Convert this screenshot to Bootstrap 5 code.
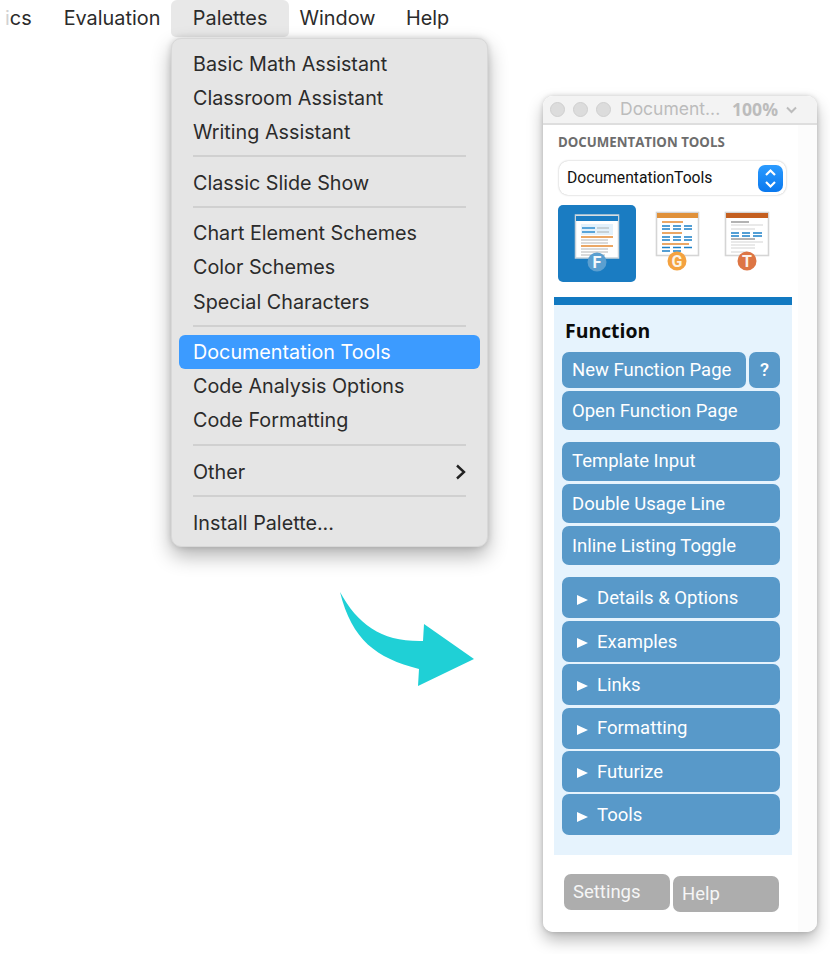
<!DOCTYPE html>
<html lang="en">
<head>
<meta charset="utf-8">
<title>Palettes</title>
<link href="https://cdn.jsdelivr.net/npm/bootstrap@5.3.0/dist/css/bootstrap.min.css" rel="stylesheet">
<style>
html,body{height:100%;background:#fff;overflow:hidden}
.stage{position:relative;width:830px;height:954px;font-family:Inter,"Liberation Sans",sans-serif;color:#2b2b2b}
.menubar{height:37px;font-size:19.85px;padding-left:5px}
.menubar .bar-item{line-height:37px;padding:0 22px;border-radius:6px 6px 5px 5px}
.menubar .bar-item.first{padding:0;margin-right:32px}
.menubar .bar-item.plain{padding:0 32.5px 0 0}
.menubar .bar-item.win{padding-right:30.5px}
.menubar .bar-item.open{background:#e8e8e8;margin-right:10px;margin-left:-22px}
.faint{color:#d2d2d2}
.app-menu.dropdown-menu{left:171px;top:38px;width:317px;height:509px;background:#e5e5e5;border:1px solid #d8d8d8;border-radius:10px;padding:7.8px 7px 0;box-shadow:0 9px 20px rgba(0,0,0,.3),0 0 6px rgba(0,0,0,.15);font-size:19.75px}
.app-menu .dropdown-item{height:34.2px;line-height:34.2px;padding:0 14px;border-radius:6px;color:#2b2b2b}
.app-menu .dropdown-item.active{background:#3c9bff;color:#fff}
.app-menu .dropdown-divider{margin:6px 14px 8.3px;height:0;border-top:2px solid #d0d0d0;opacity:1}
.app-menu .dropdown-item.active ~ .dropdown-divider{margin:6.5px 14px 8.5px}
.curve-arrow{position:absolute;left:335px;top:585px}
.pal-window{position:absolute;left:543px;top:96px;width:274px;height:836px;border:0;border-radius:10px;background:linear-gradient(to right,#fff 255px,#fcfcfc 255px);box-shadow:0 8px 16px rgba(0,0,0,.28),0 0 5px rgba(0,0,0,.18);font-family:Roboto,"Liberation Sans",sans-serif;overflow:hidden}
.pal-title{height:29px;background:#f3f3f3;border-bottom:2px solid #dedede;padding-left:7px;color:#bcbcbc}
.traffic{width:15px;height:15px;border-radius:50%;background:#dcdcdc;border:1px solid #cfcfcf;margin-right:8px}
.pal-name{font-family:Inter,sans-serif;font-size:17.5px;margin-left:1px;width:112px;white-space:nowrap}
.pal-zoom{font-family:"Open Sans",sans-serif;font-size:17.6px;font-weight:700}
.pal-head{font-family:"Open Sans",sans-serif;font-size:13.25px;font-weight:700;color:#6d6d6d;line-height:18px;margin:8px 0 0 15px;white-space:nowrap}
.pal-select{margin:10px 0 0 16px;width:227px;height:34px;background:#fff;border-radius:9px;box-shadow:0 0 2px rgba(0,0,0,.3);padding:0 3px 0 8px;font-size:15.7px;color:#111}
.stepper{width:25px;height:27px;border-radius:7px;background:linear-gradient(#2b9bff,#0a78ee)}
.tabs-row{margin:10px 0 0 15px;height:77px}
.pal-tile{width:78px;height:77px;border-radius:5px;background:#1a7cc2;flex:none}
.pal-tile.off{background:transparent}
.pal-panel{margin:15px 0 0 11px;width:238px;height:558px;background:#e6f3fd;border-top:8px solid #1279c1;padding:13px 12px 0 8px}
.pal-h{font-family:"Open Sans",sans-serif;font-weight:700;font-size:19.4px;line-height:26px;color:#0b0b0b;margin:0 0 8px 3px}
.act.btn{display:block;background:#5899c9;border:0;color:#fff;font-size:18.5px;line-height:1;border-radius:7px;text-align:left;padding:1px 10px 0;height:39px;width:100%}
.act.btn:hover{background:#5899c9;color:#fff}
.act.short{height:36px}
.act.q{width:31px;flex:none;text-align:center;padding:0;font-weight:500}
.act.wide{flex:1;width:auto}
.tight{gap:3px}
.grp{margin-top:11.5px}
.grp .act.btn{height:39.3px}
.grp2{margin-top:12px;gap:2.4px}
.grp2 .act.btn{height:41px}
.tri{display:inline-block;width:0;height:0;border-left:11px solid #fff;border-top:5px solid transparent;border-bottom:5px solid transparent;margin:0 9px 0 5px;vertical-align:-0.5px}
.foot{margin:19px 0 0 21px}
.foot-btn.btn{background:#adadad;border:0;border-radius:7px;color:#f6f6f6;font-size:18.5px;width:106px;height:36px;padding:0 0 0 9px;text-align:left;line-height:1}
.foot-btn.low{margin:2px 0 0 3px}
</style>
</head>
<body>
<div class="stage">
  <nav class="menubar d-flex align-items-start">
    <span class="bar-item first"><span class="faint">i</span>cs</span>
    <span class="bar-item plain">Evaluation</span>
    <span class="bar-item open">Palettes</span>
    <span class="bar-item plain win">Window</span>
    <span class="bar-item plain">Help</span>
  </nav>

  <div class="app-menu dropdown-menu show">
    <a class="dropdown-item" href="#">Basic Math Assistant</a>
    <a class="dropdown-item" href="#">Classroom Assistant</a>
    <a class="dropdown-item" href="#">Writing Assistant</a>
    <hr class="dropdown-divider">
    <a class="dropdown-item" href="#">Classic Slide Show</a>
    <hr class="dropdown-divider">
    <a class="dropdown-item" href="#">Chart Element Schemes</a>
    <a class="dropdown-item" href="#">Color Schemes</a>
    <a class="dropdown-item" href="#">Special Characters</a>
    <hr class="dropdown-divider">
    <a class="dropdown-item active" href="#">Documentation Tools</a>
    <a class="dropdown-item" href="#">Code Analysis Options</a>
    <a class="dropdown-item" href="#">Code Formatting</a>
    <hr class="dropdown-divider">
    <a class="dropdown-item d-flex justify-content-between align-items-center" href="#">Other
      <svg width="11" height="16" viewBox="0 0 11 16"><path d="M2 1.5 9 8 2 14.5" fill="none" stroke="#222" stroke-width="2.4"/></svg></a>
    <hr class="dropdown-divider">
    <a class="dropdown-item" href="#">Install Palette...</a>
  </div>

  <svg class="curve-arrow" width="145" height="108" viewBox="335 585 145 108">
    <path d="M340 592C358 625 382 642 423 641L424 624 474 659 418 686 419 669C376 658 352 640 340 592Z" fill="#1fd0d6"/>
  </svg>

  <div class="card pal-window">
    <div class="pal-title d-flex align-items-center">
      <span class="traffic"></span><span class="traffic"></span><span class="traffic"></span>
      <span class="pal-name">Document...</span>
      <span class="pal-zoom">100%</span>
      <svg class="ms-2" width="11" height="8" viewBox="0 0 11 8"><path d="M1 1.5 5.5 6 10 1.5" fill="none" stroke="#bcbcbc" stroke-width="2"/></svg>
    </div>
    <div class="pal-head">DOCUMENTATION TOOLS</div>
    <div class="pal-select d-flex align-items-center justify-content-between">
      <span>DocumentationTools</span>
      <span class="stepper d-flex align-items-center justify-content-center">
        <svg width="13" height="21" viewBox="0 0 13 21"><path d="M2 7 6.5 2.5 11 7M2 14 6.5 18.5 11 14" fill="none" stroke="#fff" stroke-width="2.2"/></svg>
      </span>
    </div>
    <div class="tabs-row d-flex">
      <div class="pal-tile">
        <svg width="78" height="77" viewBox="558 205 78 77">
          <rect x="575.5" y="215" width="43" height="43" fill="#fff" stroke="#c9d3da" stroke-width="1.5"/>
          <rect x="576" y="216" width="42" height="5" fill="#1a7cc2"/>
          <rect x="581" y="224" width="32" height="11" fill="#e3f1fb"/>
          <path d="M582 228h13M582 232h13" stroke="#2d8ccf" stroke-width="1.6"/>
          <path d="M597 228h12M597 232h12" stroke="#bdc6cc" stroke-width="1.6"/>
          <path d="M581 237h32M581 246h32" stroke="#e58a33" stroke-width="1.4"/>
          <path d="M581 240h27M581 243h27M581 249h27M581 252h27M581 255h24" stroke="#b5b5b5" stroke-width="1.2"/>
          <circle cx="597" cy="262" r="9.5" fill="#5b9fd0"/>
          <text x="597" y="268" text-anchor="middle" font-family="Roboto,sans-serif" font-weight="700" font-size="16" fill="#f4f8fb">F</text>
        </svg>
      </div>
      <div class="pal-tile off">
        <svg width="78" height="77" viewBox="636 205 78 77">
          <rect x="656.5" y="212.5" width="42" height="43" fill="#fff" stroke="#d5d5d5" stroke-width="1.6"/>
          <rect x="657" y="213" width="41" height="5" fill="#e0913a"/>
          <path d="M662 222h21M662 233h20M662 244h27" stroke="#e58a33" stroke-width="1.3"/>
          <path d="M662 226h8M673 226h8M684 226h8M662 229h8M673 229h8M684 229h8M662 237h8M673 237h8M684 237h8M662 240h8M673 240h8M684 240h8M662 247.5h8M673 247.5h8M684 247.5h8M662 251h8M673 251h8" stroke="#1c80c8" stroke-width="1.5"/>
          <circle cx="677" cy="261" r="9.5" fill="#f4a23f"/>
          <text x="677" y="267" text-anchor="middle" font-family="Roboto,sans-serif" font-weight="700" font-size="16" fill="#fbf3e6">G</text>
        </svg>
      </div>
      <svg width="78" height="77" viewBox="714 205 78 77">
        <rect x="725.5" y="212.5" width="43" height="43" fill="#fff" stroke="#d5d5d5" stroke-width="1.6"/>
        <rect x="726" y="213" width="42" height="5" fill="#c45f1f"/>
        <path d="M731 222h18M731 239h24" stroke="#9a9a9a" stroke-width="1.4"/>
        <path d="M731 225h32M731 229h24M731 242h32M731 245h24M731 248h24M731 252h16" stroke="#d4d4d4" stroke-width="1.2"/>
        <path d="M731 233h8M742 233h8M753 233h9M731 236h8M742 236h8M753 236h9" stroke="#1c80c8" stroke-width="1.5"/>
        <circle cx="747" cy="261" r="9.5" fill="#dd7544"/>
        <text x="747" y="267" text-anchor="middle" font-family="Roboto,sans-serif" font-weight="700" font-size="16" fill="#fbf0ea">T</text>
      </svg>
    </div>

    <div class="pal-panel">
      <div class="pal-h">Function</div>
      <div class="d-flex flex-column tight">
        <div class="d-flex tight">
          <button class="btn act short wide">New Function Page</button>
          <button class="btn act short q">?</button>
        </div>
        <button class="btn act">Open Function Page</button>
      </div>
      <div class="d-flex flex-column grp tight">
        <button class="btn act">Template Input</button>
        <button class="btn act">Double Usage Line</button>
        <button class="btn act">Inline Listing Toggle</button>
      </div>
      <div class="d-flex flex-column grp2">
        <button class="btn act"><span class="tri"></span>Details &amp; Options</button>
        <button class="btn act"><span class="tri"></span>Examples</button>
        <button class="btn act"><span class="tri"></span>Links</button>
        <button class="btn act"><span class="tri"></span>Formatting</button>
        <button class="btn act"><span class="tri"></span>Futurize</button>
        <button class="btn act"><span class="tri"></span>Tools</button>
      </div>
    </div>

    <div class="foot d-flex align-items-start">
      <button class="btn foot-btn">Settings</button>
      <button class="btn foot-btn low">Help</button>
    </div>
  </div>
</div>
<script src="https://cdn.jsdelivr.net/npm/bootstrap@5.3.0/dist/js/bootstrap.bundle.min.js"></script>
</body>
</html>
